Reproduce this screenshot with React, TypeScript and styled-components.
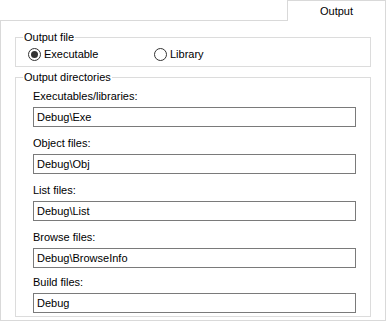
import React from 'react';
import styled, { createGlobalStyle } from 'styled-components';

const GlobalStyle = createGlobalStyle`
  html, body {
    margin: 0;
    padding: 0;
    background: #ffffff;
  }
  body {
    font-family: 'Liberation Sans', Arial, sans-serif;
    font-size: 11px;
    color: #000000;
  }
`;

/* ---------------------------------------------------------------------- */

const fields = [
  { label: 'Executables/libraries:', value: 'Debug\\Exe', gap: 0 },
  { label: 'Object files:', value: 'Debug\\Obj', gap: 9 },
  { label: 'List files:', value: 'Debug\\List', gap: 9 },
  { label: 'Browse files:', value: 'Debug\\BrowseInfo', gap: 9 },
  { label: 'Build files:', value: 'Debug', gap: 7 },
];

export default function App() {
  return (
    <Window>
      <GlobalStyle />
      <TabStrip>
        <TabFiller />
        <Tab>Output</Tab>
      </TabStrip>

      <Panel>
        <GroupBox>
          <Caption>Output file</Caption>
          <RadioRow>
            <RadioItem>
              <RadioCircle $checked />
              <span>Executable</span>
            </RadioItem>
            <RadioItem>
              <RadioCircle />
              <span>Library</span>
            </RadioItem>
          </RadioRow>
        </GroupBox>

        <DirGroup>
          <Caption>Output directories</Caption>
          <DirBody>
            {fields.map((f) => (
              <Field key={f.label} $gap={f.gap}>
                <FieldLabel>{f.label}</FieldLabel>
                <TextBox>{f.value}</TextBox>
              </Field>
            ))}
          </DirBody>
        </DirGroup>
      </Panel>
    </Window>
  );
}

/* ---------------------------------------------------------------------- */

const Window = styled.div`
  width: 386px;
  height: 321px;
  display: flex;
  flex-direction: column;
  background: #ffffff;
`;

const TabStrip = styled.div`
  display: flex;
  height: 21px;
`;

const TabFiller = styled.div`
  flex: 1;
  border-bottom: 1px solid #d9d9d9;
`;

const Tab = styled.div`
  width: 99px;
  height: 21px;
  box-sizing: border-box;
  border: 1px solid #d9d9d9;
  border-bottom: none;
  display: flex;
  align-items: center;
  justify-content: center;
  padding-bottom: 1px;
`;

const Panel = styled.div`
  height: 300px;
  box-sizing: border-box;
  border: 1px solid #d9d9d9;
  border-top: none;
  padding: 9px 14px 0 14px;
  display: flex;
  flex-direction: column;
`;

const GroupBox = styled.fieldset`
  margin: 0;
  padding: 0;
  border: 1px solid #dcdcdc;
  min-width: 0;
`;

const DirGroup = styled(GroupBox)`
  margin-top: 3px;
`;

const Caption = styled.legend`
  margin-left: 7px;
  padding: 0 1px;
  line-height: 14px;
  height: 14px;
`;

const RadioRow = styled.div`
  display: flex;
  height: 14px;
  align-items: center;
  padding: 3px 0 5px 12px;
`;

const RadioItem = styled.label`
  width: 126px;
  display: flex;
  align-items: center;
  gap: 3px;
`;

const RadioCircle = styled.span<{ $checked?: boolean }>`
  width: 13px;
  height: 13px;
  box-sizing: border-box;
  border-radius: 50%;
  border: 1px solid #333333;
  background: #ffffff;
  display: flex;
  align-items: center;
  justify-content: center;
  &::after {
    content: '';
    width: 7px;
    height: 7px;
    border-radius: 50%;
    background: ${(p) => (p.$checked ? '#333333' : 'transparent')};
  }
`;

const DirBody = styled.div`
  display: flex;
  flex-direction: column;
  padding: 5px 14px 3px 17px;
`;

const Field = styled.div<{ $gap: number }>`
  display: flex;
  flex-direction: column;
  gap: 4px;
  margin-top: ${(p) => p.$gap}px;
`;

const FieldLabel = styled.div`
  line-height: 14px;
  height: 14px;
`;

const TextBox = styled.div`
  height: 20px;
  box-sizing: border-box;
  border: 1px solid #7a7a7a;
  padding: 0 3px;
  display: flex;
  align-items: center;
`;
